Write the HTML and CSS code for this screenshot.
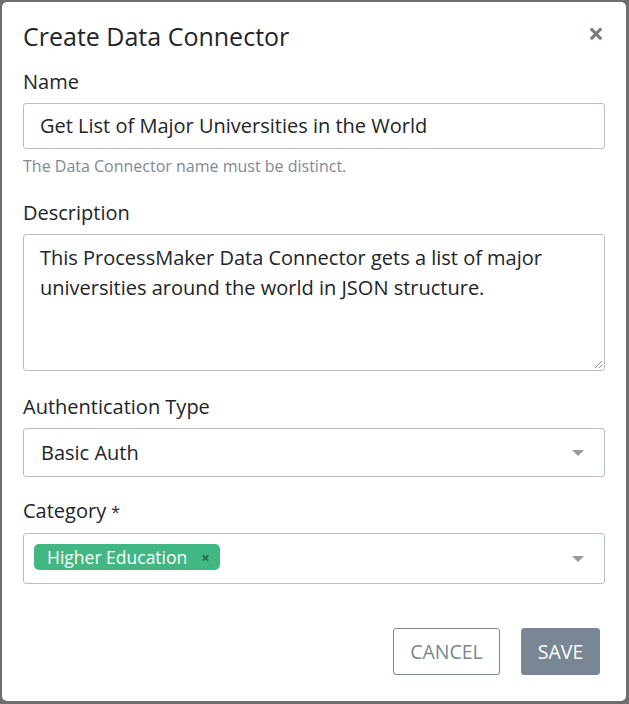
FILE: index.html
```html
<!DOCTYPE html>
<html>
<head>
<meta charset="utf-8">
<link rel="stylesheet" href="styles.css">
</head>
<body>
<div class="backdrop">
  <div class="modal">
    <div class="modal-header">
      <h1 class="modal-title">Create Data Connector</h1>
      <span class="close">&times;</span>
    </div>
    <div class="modal-body">
      <div class="group">
        <label class="label">Name</label>
        <div class="input">Get List of Major Universities in the World</div>
        <div class="help">The Data Connector name must be distinct.</div>
      </div>
      <div class="group">
        <label class="label">Description</label>
        <div class="textarea">This ProcessMaker Data Connector gets a list of major universities around the world in JSON structure.
          <svg class="grip" width="10" height="10" viewBox="0 0 10 10"><path d="M9 2 L2 9 M9 6 L6 9" stroke="#888" stroke-width="1"/></svg>
        </div>
      </div>
      <div class="group group-auth">
        <label class="label">Authentication Type</label>
        <div class="select">
          <span>Basic Auth</span>
          <span class="caret"></span>
        </div>
      </div>
      <div class="group group-last">
        <label class="label">Category <span class="req">*</span></label>
        <div class="multiselect">
          <span class="tag">Higher Education <span class="tag-x">&times;</span></span>
          <span class="caret"></span>
        </div>
      </div>
    </div>
    <div class="modal-footer">
      <button class="btn btn-outline">CANCEL</button>
      <button class="btn btn-solid">SAVE</button>
    </div>
  </div>
</div>
</body>
</html>
```
FILE: styles.css
```css
html, body {
  margin: 0;
  padding: 0;
}
body {
  width: 629px;
  height: 704px;
  background: #6e6e6e;
  font-family: "Open Sans", "Liberation Sans", sans-serif;
  color: #212529;
  overflow: hidden;
}
.backdrop {
  padding: 2px 3px 3px 2px;
  height: 704px;
  box-sizing: border-box;
}
.modal {
  background: #fff;
  border-radius: 5px;
  height: 699px;
  box-sizing: border-box;
  display: flex;
  flex-direction: column;
}
.modal-header {
  display: flex;
  justify-content: space-between;
  align-items: center;
  padding: 17px 21px 0 21px;
}
.modal-title {
  margin: 0;
  font-weight: 400;
  font-size: 25px;
  line-height: 34px;
  color: #212529;
}
.close {
  font-size: 28px;
  font-weight: 700;
  color: #7a7a7a;
  line-height: 1;
  margin-right: 1px;
  margin-top: -6px;
}
.modal-body {
  padding: 16px 21px 0 21px;
}
.group {
  margin-bottom: 23px;
}
.group-auth {
  margin-bottom: 21px;
}
.group-last {
  margin-bottom: 0;
}
.label {
  display: block;
  font-size: 20px;
  line-height: 26px;
  margin-bottom: 8px;
}
.req {
  font-size: 16px;
}
.input {
  height: 46px;
  box-sizing: border-box;
  border: 1px solid #b6bec6;
  border-radius: 3px;
  padding: 0 16px;
  font-size: 20px;
  line-height: 44px;
}
.help {
  margin-top: 6px;
  font-size: 16px;
  line-height: 22px;
  color: #808a93;
}
.textarea {
  position: relative;
  height: 137px;
  box-sizing: border-box;
  border: 1px solid #b6bec6;
  border-radius: 3px;
  padding: 8px 16px;
  font-size: 20px;
  line-height: 30px;
}
.grip {
  position: absolute;
  right: 1px;
  bottom: 1px;
}
.select, .multiselect {
  display: flex;
  align-items: center;
  justify-content: space-between;
  box-sizing: border-box;
  border: 1px solid #b6bec6;
  border-radius: 3px;
  font-size: 20px;
}
.select {
  height: 49px;
  padding: 0 20px 0 17px;
}
.multiselect {
  height: 51px;
  padding: 0 20px 0 10px;
}
.caret {
  width: 0;
  height: 0;
  border-left: 6px solid transparent;
  border-right: 6px solid transparent;
  border-top: 6px solid #999;
}
.tag {
  display: inline-flex;
  align-items: center;
  align-self: flex-start;
  margin-top: 10px;
  background: #41b883;
  color: #fff;
  border-radius: 5px;
  height: 26px;
  padding: 0 10px 0 13px;
  font-size: 17.5px;
}
.tag-x {
  color: #266d4d;
  font-size: 15px;
  font-weight: 700;
  margin-left: 14px;
}
.modal-footer {
  display: flex;
  justify-content: flex-end;
  gap: 21px;
  padding: 0 26px 0 0;
  margin-top: auto;
  margin-bottom: 26px;
}
.btn {
  font-family: inherit;
  font-size: 19.5px;
  height: 47px;
  border-radius: 3px;
  box-sizing: border-box;
  cursor: pointer;
}
.btn-outline {
  background: #fff;
  border: 1px solid #788793;
  color: #788793;
  width: 107px;
}
.btn-solid {
  background: #788793;
  border: 1px solid #788793;
  color: #fff;
  width: 79px;
}
```
